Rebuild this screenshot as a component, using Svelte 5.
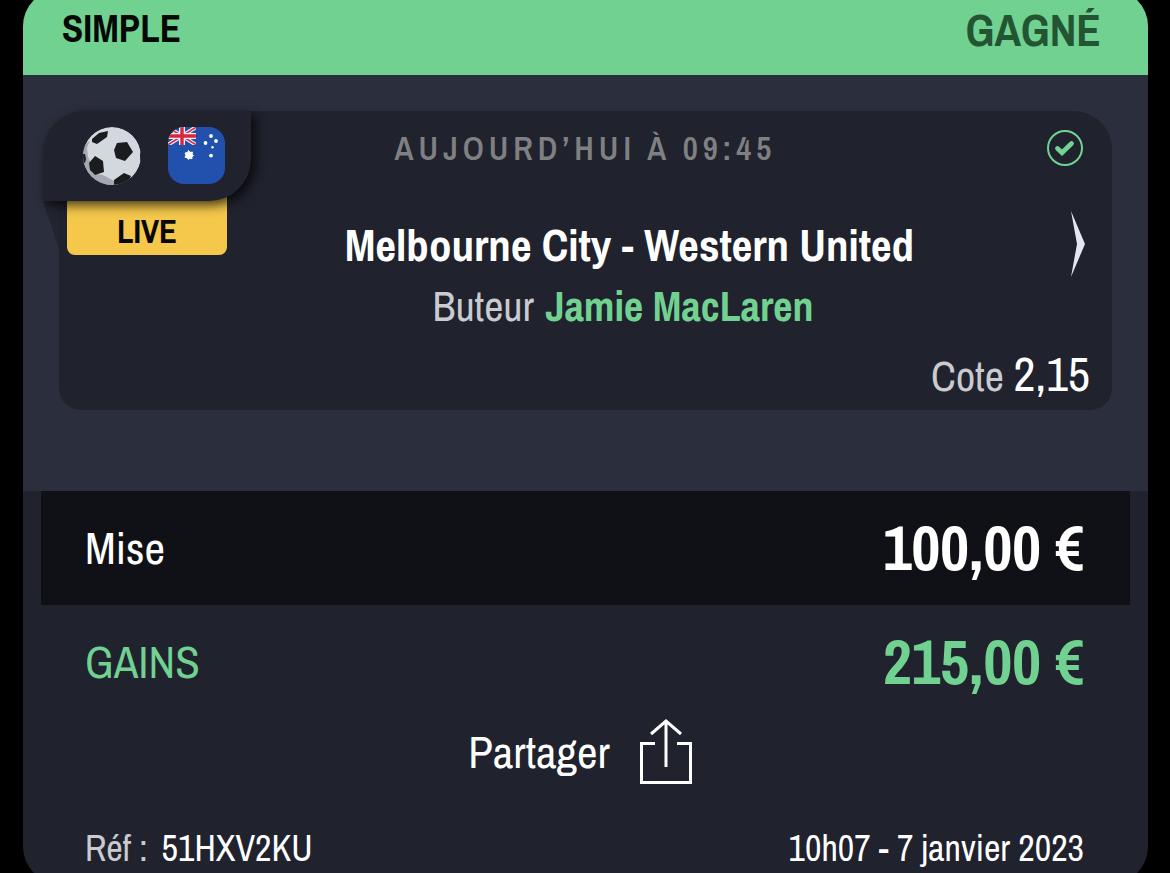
<script>
  const bet = {
    type: 'SIMPLE',
    status: 'GAGNÉ',
    date: 'Aujourd’hui à 09:45',
    match: 'Melbourne City - Western United',
    market: 'Buteur',
    pick: 'Jamie MacLaren',
    odds: '2,15',
    stake: '100,00 €',
    payout: '215,00 €',
    ref: '51HXV2KU',
    placed: '10h07 - 7 janvier 2023'
  };
</script>

<main class="page">
  <article class="ticket">
    <header class="top">
      <span class="type">{bet.type}</span>
      <strong class="status">{bet.status}</strong>
    </header>

    <section class="panel">
      <div class="event">
        <div class="badges">
          <svg class="fold" viewBox="0 0 16 48" aria-hidden="true"><path d="M0 0H16V48Z" fill="#222430" /></svg>
          <div class="tab">
            <svg class="ball" viewBox="0 0 58 58" role="img" aria-label="Football">
              <defs><clipPath id="ball-clip"><circle cx="29" cy="29" r="29" /></clipPath></defs>
              <g clip-path="url(#ball-clip)">
                <circle cx="29" cy="29" r="29" fill="#d3d8de" />
                <path d="M7 13L4 21L5 30L8 36L9 46L20 48L31 54L36 58H14L0 42V20Z" fill="#a4a9b1" />
                <g fill="#1b1c1e">
                  <path d="M9 12L16 6L25 4L24 10L14 17L9 15Z" />
                  <path d="M34 16L44 15L50 25L42 34L33 31L31 23Z" />
                  <path d="M6 36L12 29L20 34L21 45L12 48L7 43Z" />
                  <path d="M31 53L41 46L48 49L44 58H31Z" />
                  <path d="M0 27L2 27L3 32L2 36L0 35Z" />
                  <path d="M57 26H58V33L57 34Z" />
                </g>
              </g>
            </svg>
            <svg class="flag" viewBox="0 0 57 57" role="img" aria-label="Australie">
              <defs>
                <clipPath id="flag-clip"><rect width="57" height="57" rx="16" /></clipPath>
                <clipPath id="jack-clip"><rect width="28" height="18" /></clipPath>
              </defs>
              <g clip-path="url(#flag-clip)">
                <rect width="57" height="57" fill="#2150ad" />
                <g clip-path="url(#jack-clip)">
                  <path d="M-2 -1L30 19M-2 19L30 -1" stroke="#e8ebf5" stroke-width="4" />
                  <path d="M-2 -1L30 19M-2 19L30 -1" stroke="#d8324a" stroke-width="1.6" />
                  <path d="M14 0V19M0 9H28" stroke="#eef0f7" stroke-width="6" />
                  <path d="M14 0V19M0 9H28" stroke="#d8263e" stroke-width="3.4" />
                </g>
                <g fill="#fff">
                  <path d="M20.5 23.5L22 25.5L24.5 25L24 27.3L25.5 28.5L23.8 29.7L24 31.8L21.9 31.2L20.3 32.5L19.2 30.7L17 30.3L18 28L17 26L19.6 25.6Z" stroke="#fff" stroke-width="1" />
                  <circle cx="43" cy="9" r="1.9" />
                  <circle cx="37.5" cy="16" r="1.9" />
                  <circle cx="48" cy="14" r="1.9" />
                  <circle cx="44.5" cy="20.3" r="1.2" />
                  <circle cx="43" cy="28.6" r="1.9" />
                </g>
              </g>
            </svg>
          </div>
          <span class="live">LIVE</span>
        </div>

        <div class="when">
          <time>{bet.date}</time>
          <svg class="check" viewBox="0 0 36 36" role="img" aria-label="Gagné">
            <circle cx="18" cy="18" r="17" fill="none" stroke="#72d292" stroke-width="2" />
            <path d="M10.5 18.5L15 22.7L24.5 13.5" fill="none" stroke="#72d292" stroke-width="4.8" stroke-linecap="round" stroke-linejoin="miter" />
          </svg>
        </div>

        <div class="body">
          <div class="names">
            <h1>{bet.match}</h1>
            <p><span>{bet.market}</span> <strong>{bet.pick}</strong></p>
          </div>
          <button class="open" aria-label="Voir le match">
            <svg viewBox="0 0 14 66" aria-hidden="true"><path d="M0 0L14 33L0 66L6 33Z" fill="#e4e6f2" /></svg>
          </button>
        </div>

        <p class="odds"><span>Cote</span> <b>{bet.odds}</b></p>
      </div>
    </section>

    <dl class="sums">
      <div class="stake"><dt>Mise</dt><dd>{bet.stake}</dd></div>
      <div class="gain"><dt>GAINS</dt><dd>{bet.payout}</dd></div>
    </dl>

    <div class="actions">
      <button class="share">
        Partager
        <svg viewBox="0 0 52 66" aria-hidden="true">
          <path d="M15 24.5H1.5V63.5H50.5V24.5H37M26 48V3M11 15L26 2L41 15" fill="none" stroke="#fff" stroke-width="3" />
        </svg>
      </button>
    </div>

    <footer>
      <p><span>Réf :</span> {bet.ref}</p>
      <time datetime="2023-01-07T10:07">{bet.placed}</time>
    </footer>
  </article>
</main>

<style>
  :global(body) { margin: 0; background: #000; }
  .page {
    height: 100vh;
    overflow: hidden;
    font-family: 'Archivo Narrow', 'Liberation Sans Narrow', 'Roboto Condensed', 'Liberation Sans', sans-serif;
    color: #fff;
  }
  p, h1, dl, dd { margin: 0; }
  button { border: 0; padding: 0; background: none; color: inherit; font-family: inherit; cursor: pointer; }
  svg { display: block; flex: none; }

  .ticket {
    margin: -10px 22px 0 23px;
    border-radius: 36px;
    overflow: hidden;
    background: #20222d;
  }
  .top {
    display: flex;
    justify-content: space-between;
    align-items: flex-start;
    padding: 14px 47px 19px 39px;
    background: #71d191;
  }
  .type { color: #050806; font-size: 39px; font-weight: 700; line-height: 48px; }
  .status { color: #235533; font-size: 45px; line-height: 52px; }

  .panel { padding: 36px 36px 81px; background: #2b2e3d; }
  .event {
    position: relative;
    display: flex;
    flex-direction: column;
    border-radius: 42px 38px 22px 22px;
    background: #20222d;
  }
  .badges { position: absolute; top: 0; left: -16px; }
  .fold { position: absolute; top: 90px; left: 0; width: 16px; height: 48px; }
  .tab {
    position: relative;
    z-index: 1;
    display: flex;
    align-items: flex-start;
    gap: 27px;
    padding: 16px 26px 16px 40px;
    border-radius: 42px 0 42px 0;
    background: #20222d;
    box-shadow: 4px 4px 12px rgba(0, 0, 0, 0.75);
  }
  .ball { width: 58px; height: 58px; }
  .flag { width: 57px; height: 57px; }
  .live {
    display: block;
    margin: -5px 24px 0;
    padding: 17px 0 6px;
    border-radius: 0 0 8px 8px;
    background: #f5c84b;
    color: #080808;
    font-size: 33px;
    font-weight: 700;
    line-height: 36px;
    text-align: center;
  }
  .when {
    display: grid;
    grid-template-columns: 1fr auto 1fr;
    align-items: center;
    padding: 19px 29px 0;
  }
  .when time {
    grid-column: 2;
    color: #7f8082;
    font-size: 33px;
    font-weight: 600;
    line-height: 36px;
    letter-spacing: 5px;
    text-transform: uppercase;
  }
  .check { justify-self: end; width: 36px; height: 36px; }
  .body { display: flex; align-items: flex-start; padding: 45px 27px 0 129px; }
  .names { flex: 1; text-align: center; }
  .names h1 { font-size: 45px; line-height: 68px; }
  .names p { padding-right: 13px; font-size: 42px; line-height: 54px; }
  .names p span { margin-right: 2px; }
  .names p span, .odds span { color: #cacbd0; }
  .names strong, .gain { color: #71d191; }
  .open svg { width: 14px; height: 66px; }
  .odds { padding: 13px 22px 6px; text-align: right; font-size: 42px; line-height: 56px; }
  .odds b { font-size: 48px; font-weight: 400; }

  .sums > div {
    display: flex;
    justify-content: space-between;
    align-items: center;
    margin: 0 18px;
    padding: 21px 46px 21px 44px;
    line-height: 72px;
  }
  .stake { background: #101116; }
  .sums dt { font-size: 45px; }
  .sums dd { font-size: 63px; font-weight: 700; }
  .actions { padding-right: 11px; }
  .share {
    display: flex;
    align-items: center;
    gap: 30px;
    margin: 0 auto;
    font-size: 45px;
    line-height: 66px;
  }
  .share svg { width: 52px; height: 66px; }
  footer {
    display: flex;
    justify-content: space-between;
    padding: 42px 64px 14px 62px;
    font-size: 36px;
    line-height: 42px;
  }
  footer span { margin-right: 6px; color: #cacbd0; }
</style>
